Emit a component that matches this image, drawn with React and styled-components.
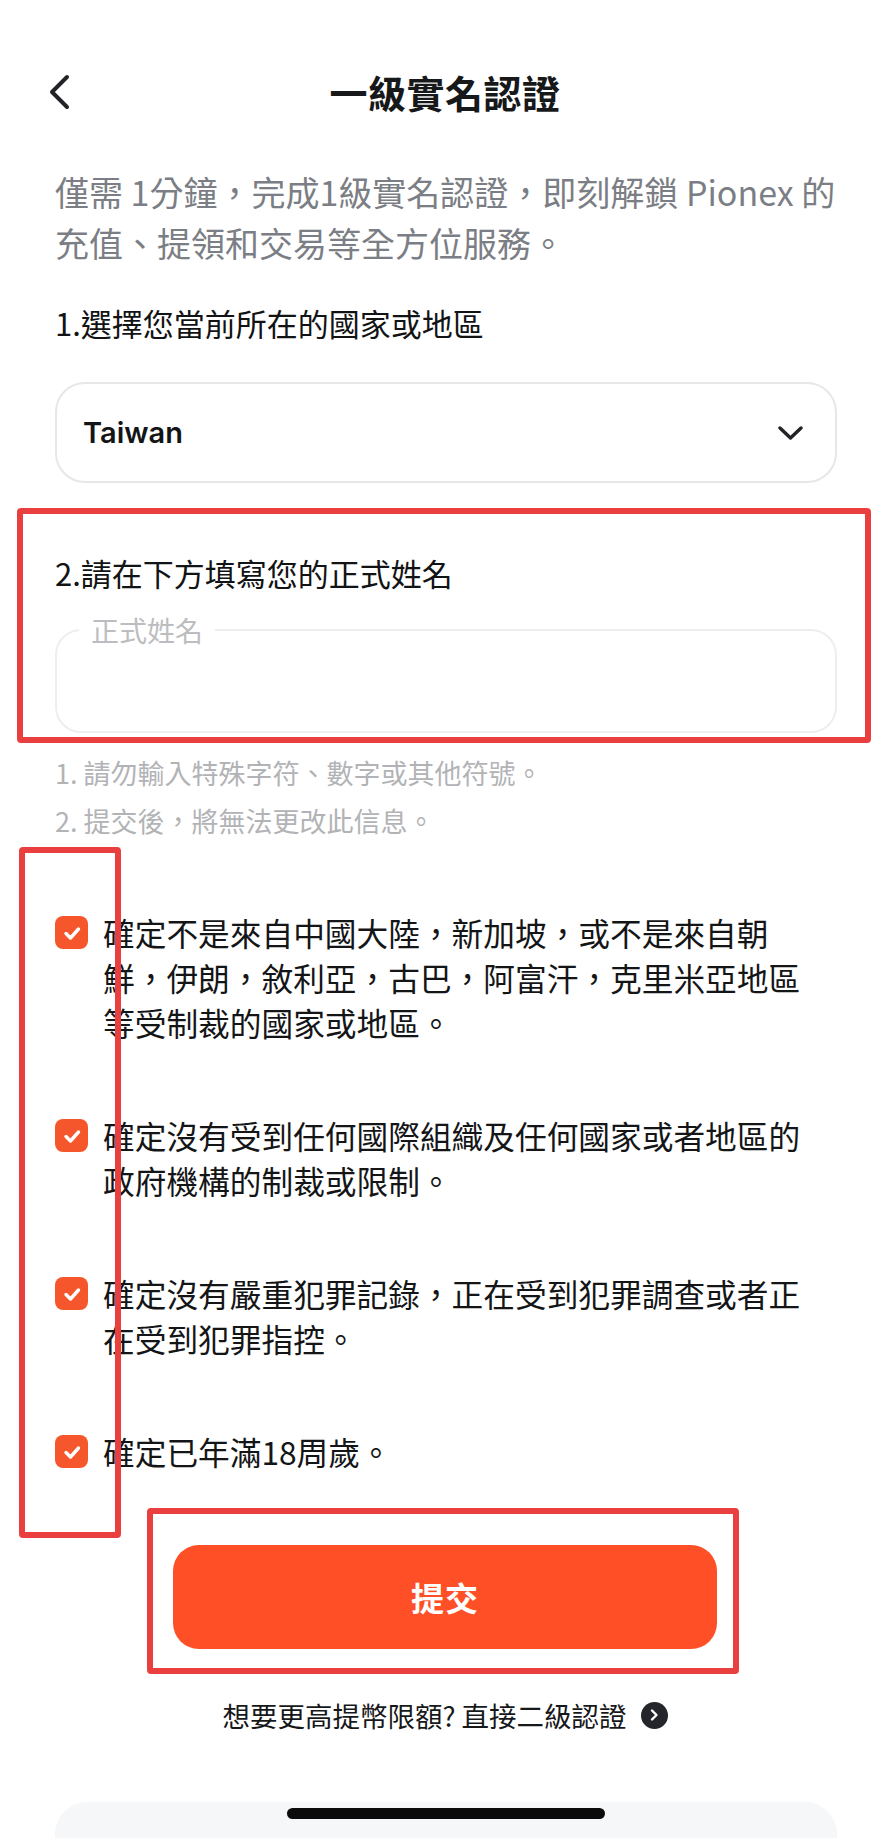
import React from "react";
import styled, { createGlobalStyle } from "styled-components";

const GlobalStyle = createGlobalStyle`
  html, body { margin: 0; padding: 0; background: #ffffff; }
  body {
    font-family: "Noto Sans CJK TC", "Noto Sans", "Liberation Sans", sans-serif;
    -webkit-font-smoothing: antialiased;
  }
  * { box-sizing: border-box; }
`;

const Page = styled.div`
  position: relative;
  width: 890px;
  height: 1838px;
  overflow: hidden;
  background: #ffffff;
  display: flex;
  flex-direction: column;
`;

const Header = styled.header`
  margin-top: 44px;
  height: 96px;
  padding: 0 48px;
  display: grid;
  grid-template-columns: 1fr auto 1fr;
  align-items: center;
`;

const BackButton = styled.button`
  justify-self: start;
  border: 0;
  background: none;
  padding: 0;
  width: 22px;
  height: 36px;
  display: flex;
  align-items: center;
  color: #222326;
`;

const Title = styled.h1`
  margin: 0;
  font-size: 38px;
  line-height: 50px;
  font-weight: 700;
  color: #17181a;
  letter-spacing: 0.5px;
`;

const Content = styled.main`
  padding: 0 53px 0 55px;
  display: flex;
  flex-direction: column;
`;

const Intro = styled.p`
  margin: 26px -10px 0 0;
  font-size: 34px;
  line-height: 51px;
  color: #7b7e84;
`;

const StepLabel = styled.div`
  margin-top: ${(p) => p.$mt || 0}px;
  font-size: 31px;
  line-height: 45px;
  color: #121314;
  font-weight: 400;
`;

const Select = styled.div`
  margin-top: 37px;
  height: 101px;
  border: 2px solid #e7e7e9;
  border-radius: 30px;
  padding: 0 32px 0 26px;
  display: flex;
  align-items: center;
  justify-content: space-between;
`;

const SelectValue = styled.span`
  font-family: "Inter", "Noto Sans", sans-serif;
  font-size: 29px;
  font-weight: 600;
  color: #141517;
`;

const Section = styled.section`
  position: relative;
  margin-top: 67px;
  display: flex;
  flex-direction: column;
`;

const Mark = styled.div`
  position: absolute;
  top: ${(p) => p.$t}px;
  bottom: ${(p) => p.$b}px;
  left: ${(p) => p.$l}px;
  ${(p) => (p.$w ? `width: ${p.$w}px;` : `right: ${p.$r}px;`)}
  border: 6px solid #e9403f;
  border-radius: 4px;
  pointer-events: none;
`;

const Field = styled.fieldset`
  margin: 18px 0 0;
  padding: 0;
  border: 2px solid #eeeef0;
  border-radius: 26px;
`;

const Legend = styled.legend`
  margin-left: 22px;
  padding: 0 12px;
  font-size: 28px;
  line-height: 34px;
  color: #bcbdc0;
`;

const NameInput = styled.input`
  display: block;
  width: 100%;
  height: 84px;
  border: 0;
  outline: none;
  background: transparent;
  padding: 0 34px;
  font-size: 30px;
  font-family: inherit;
`;

const Hints = styled.div`
  margin-top: 16px;
  display: flex;
  flex-direction: column;
`;

const Hint = styled.div`
  font-size: 27px;
  line-height: 48px;
  color: #b2b3b6;
`;

const Checklist = styled.div`
  position: relative;
  margin-top: 65px;
  display: flex;
  flex-direction: column;
  gap: 68px;
`;

const CheckItem = styled.label`
  display: flex;
  align-items: flex-start;
  gap: 15px;
  padding-right: 12px;
`;

const Box = styled.span`
  flex: 0 0 33px;
  width: 33px;
  height: 33px;
  margin-top: 6px;
  border-radius: 8px;
  background: #f5562b;
  display: flex;
  align-items: center;
  justify-content: center;
`;

const CheckText = styled.span`
  font-size: 31.7px;
  line-height: 45px;
  color: #141517;
`;

const ButtonWrap = styled.div`
  position: relative;
  width: 544px;
  margin: 71px auto 0;
`;

const Submit = styled.button`
  width: 100%;
  height: 104px;
  border: 0;
  border-radius: 26px;
  background: #fe4f27;
  color: #ffffff;
  font-family: inherit;
  font-size: 33px;
  font-weight: 700;
  letter-spacing: 1px;
`;

const UpgradeLink = styled.div`
  margin-top: 46px;
  display: flex;
  justify-content: center;
  align-items: center;
  gap: 14px;
  font-size: 27.5px;
  line-height: 40px;
  color: #17181a;
`;

const RoundArrow = styled.span`
  width: 27px;
  height: 27px;
  border-radius: 50%;
  background: #24262b;
  display: flex;
  align-items: center;
  justify-content: center;
`;

const BottomSheet = styled.div`
  margin: 67px 53px 0 55px;
  flex: 1;
  background: #f5f7f8;
  border-radius: 32px 32px 0 0;
  display: flex;
  justify-content: center;
  padding-top: 6px;
`;

const HomeIndicator = styled.div`
  width: 318px;
  height: 11px;
  border-radius: 6px;
  background: #0b0b0b;
`;

const Check = () => (
  <svg width="22" height="22" viewBox="0 0 22 22" fill="none">
    <path d="M5 11.5 L9.5 16 L17.5 7" stroke="#ffffff" strokeWidth="3.4" strokeLinecap="round" strokeLinejoin="round" />
  </svg>
);

const items = [
  "確定不是來自中國大陸，新加坡，或不是來自朝鮮，伊朗，敘利亞，古巴，阿富汗，克里米亞地區等受制裁的國家或地區。",
  "確定沒有受到任何國際組織及任何國家或者地區的政府機構的制裁或限制。",
  "確定沒有嚴重犯罪記錄，正在受到犯罪調查或者正在受到犯罪指控。",
  "確定已年滿18周歲。",
];

export default function App() {
  return (
    <>
      <GlobalStyle />
      <Page>
        <Header>
          <BackButton aria-label="back">
            <svg width="22" height="36" viewBox="0 0 22 36" fill="none">
              <path d="M19 3 L4 18 L19 33" stroke="currentColor" strokeWidth="4" strokeLinecap="round" strokeLinejoin="round" />
            </svg>
          </BackButton>
          <Title>一級實名認證</Title>
          <span />
        </Header>

        <Content>
          <Intro>僅需 1分鐘，完成1級實名認證，即刻解鎖 Pionex 的充值、提領和交易等全方位服務。</Intro>

          <StepLabel $mt={32}>1.選擇您當前所在的國家或地區</StepLabel>
          <Select>
            <SelectValue>Taiwan</SelectValue>
            <svg width="25" height="14" viewBox="0 0 25 14" fill="none">
              <path d="M2 2 L12.5 12 L23 2" stroke="#222326" strokeWidth="3.4" strokeLinecap="round" strokeLinejoin="round" />
            </svg>
          </Select>

          <Section>
            <Mark $t={-42} $b={-10} $l={-38} $r={-34} />
            <StepLabel>2.請在下方填寫您的正式姓名</StepLabel>
            <Field>
              <Legend>正式姓名</Legend>
              <NameInput type="text" aria-label="正式姓名" />
            </Field>
          </Section>

          <Hints>
            <Hint>1. 請勿輸入特殊字符、數字或其他符號。</Hint>
            <Hint>2. 提交後，將無法更改此信息。</Hint>
          </Hints>

          <Checklist>
            <Mark $t={-63} $b={-64} $l={-36} $w={102} />
            {items.map((t) => (
              <CheckItem key={t}>
                <Box>
                  <Check />
                </Box>
                <CheckText>{t}</CheckText>
              </CheckItem>
            ))}
          </Checklist>
        </Content>

        <ButtonWrap>
          <Mark $t={-37} $b={-25} $l={-26} $r={-22} />
          <Submit>提交</Submit>
        </ButtonWrap>

        <UpgradeLink>
          <span>想要更高提幣限額? 直接二級認證</span>
          <RoundArrow>
            <svg width="12" height="14" viewBox="0 0 12 14" fill="none">
              <path d="M4 2.5 L8.5 7 L4 11.5" stroke="#ffffff" strokeWidth="2.4" strokeLinecap="round" strokeLinejoin="round" />
            </svg>
          </RoundArrow>
        </UpgradeLink>

        <BottomSheet>
          <HomeIndicator />
        </BottomSheet>
      </Page>
    </>
  );
}
